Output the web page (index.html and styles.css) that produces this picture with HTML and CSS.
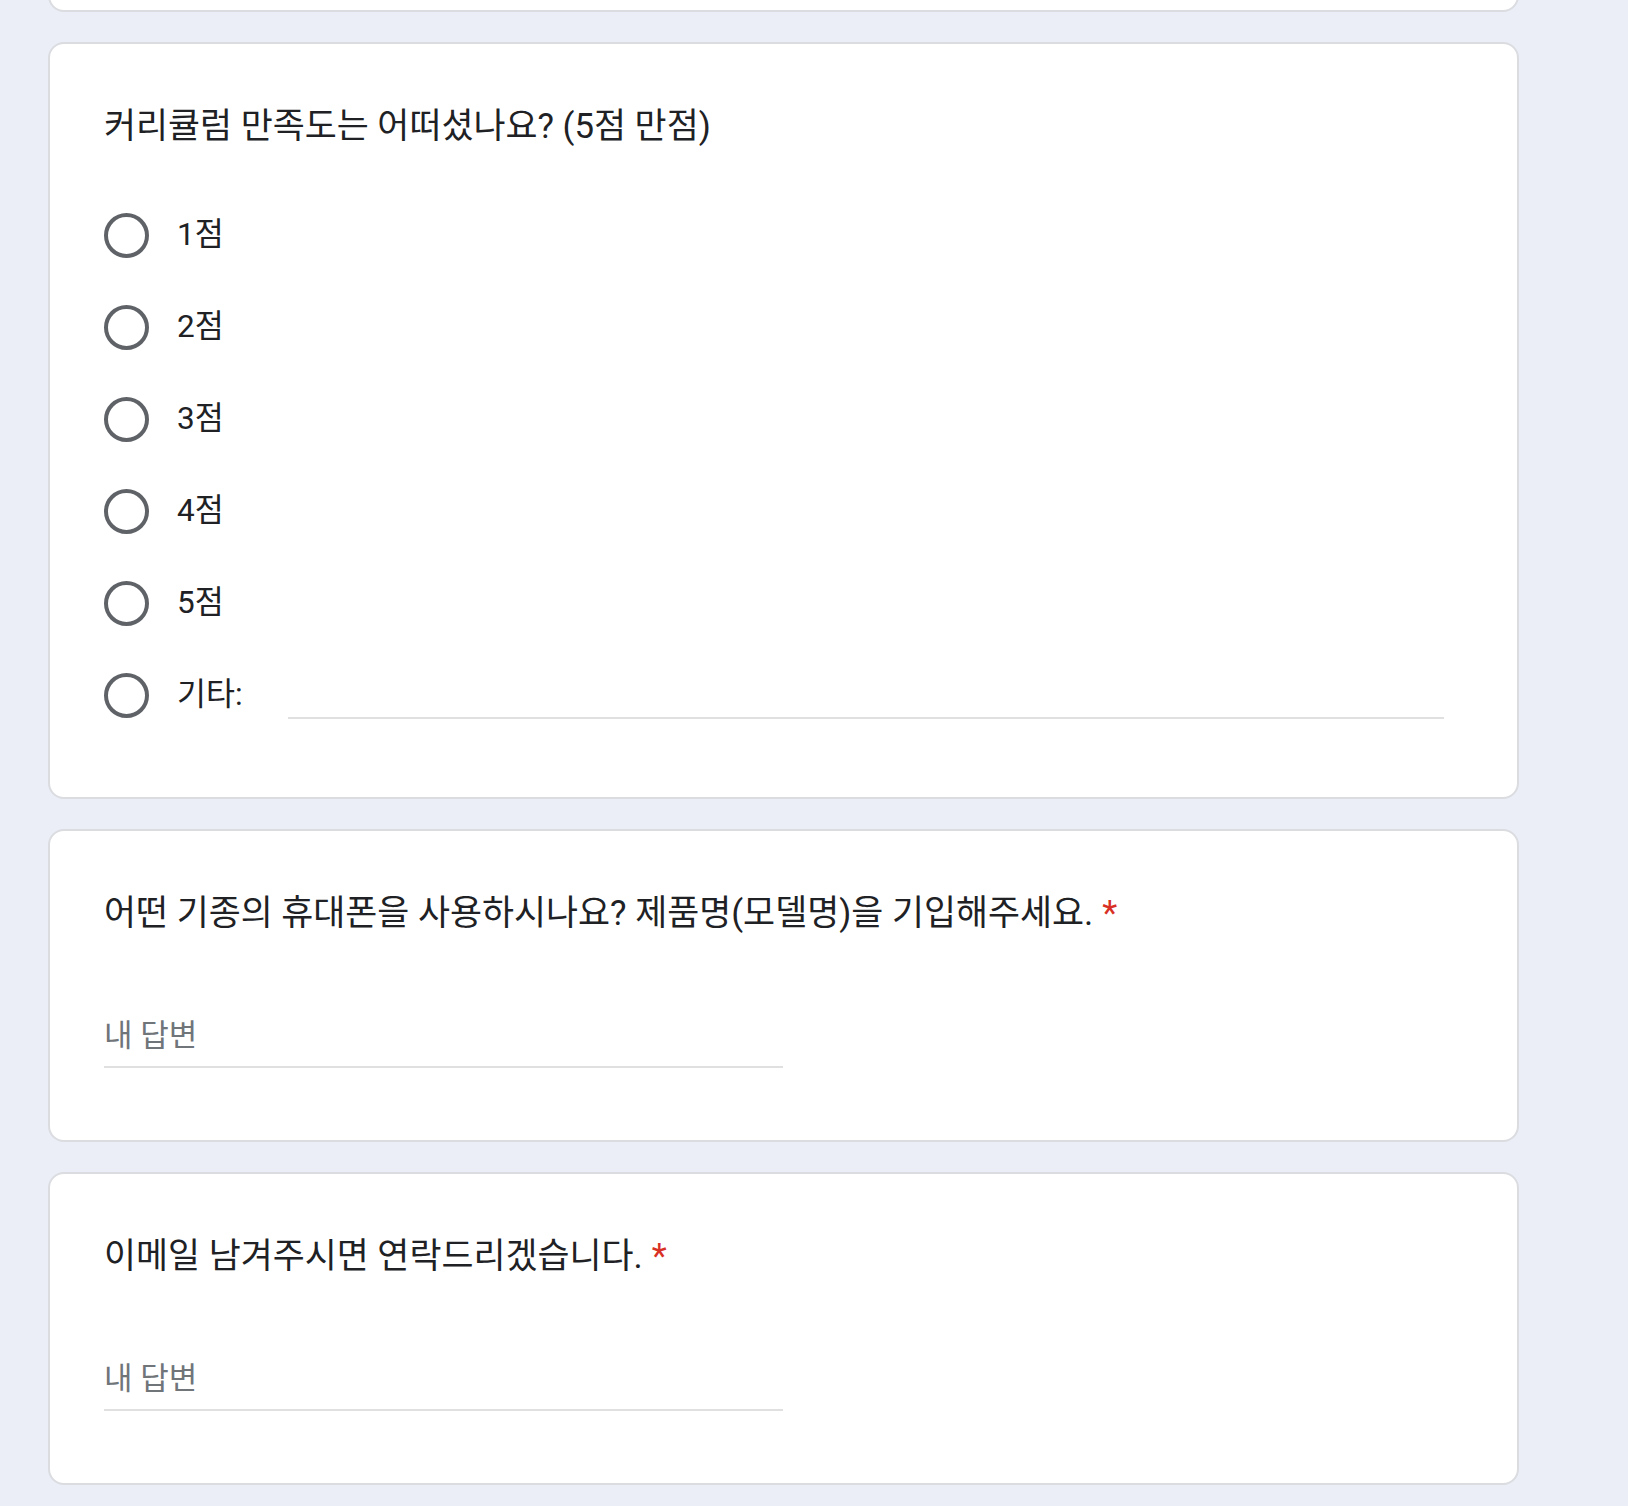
FILE: index.html
```html
<!DOCTYPE html>
<html lang="ko">
<head>
<meta charset="utf-8">
<title>설문</title>
<link rel="stylesheet" href="styles.css">
</head>
<body>
<div class="page">
  <div class="card card-stub"></div>

  <div class="card q-card q-choice">
    <div class="q-title">커리큘럼 만족도는 어떠셨나요? (5점 만점)</div>
    <div class="options">
      <div class="option"><span class="radio"></span><span class="opt-label">1점</span></div>
      <div class="option"><span class="radio"></span><span class="opt-label">2점</span></div>
      <div class="option"><span class="radio"></span><span class="opt-label">3점</span></div>
      <div class="option"><span class="radio"></span><span class="opt-label">4점</span></div>
      <div class="option"><span class="radio"></span><span class="opt-label">5점</span></div>
      <div class="option"><span class="radio"></span><span class="opt-label other-label">기타:</span><span class="other-line"></span></div>
    </div>
  </div>

  <div class="card q-card q-text">
    <div class="q-title">어떤 기종의 휴대폰을 사용하시나요? 제품명(모델명)을 기입해주세요.<span class="req">*</span></div>
    <div class="answer"><span class="placeholder">내 답변</span></div>
  </div>

  <div class="card q-card q-text">
    <div class="q-title">이메일 남겨주시면 연락드리겠습니다.<span class="req">*</span></div>
    <div class="answer"><span class="placeholder">내 답변</span></div>
  </div>
</div>
</body>
</html>
```

FILE: styles.css
```css
html, body {
  margin: 0;
  padding: 0;
}

body {
  background: #ebeef7;
  font-family: Roboto, "Noto Sans CJK KR", sans-serif;
  color: #202124;
  overflow: hidden;
}

.page {
  display: flex;
  flex-direction: column;
  gap: 30px;
  width: 1471px;
  margin-left: 48px;
}

.card {
  box-sizing: border-box;
  background: #ffffff;
  border: 2px solid #dadce0;
  border-radius: 16px;
}

.card-stub {
  margin-top: -40px;
  height: 52px;
}

.q-card {
  padding: 62px 73px 0 54px;
}

.q-choice {
  height: 757px;
}

.q-text {
  height: 313px;
}

.q-title {
  font-size: 34.8px;
  line-height: 40px;
  letter-spacing: 0;
  white-space: nowrap;
}

.req {
  color: #d93025;
  margin-left: 9px;
}

.options {
  margin-top: 43px;
  display: flex;
  flex-direction: column;
}

.option {
  height: 92px;
  display: flex;
  align-items: center;
}

.radio {
  box-sizing: border-box;
  width: 45px;
  height: 45px;
  border: 4px solid #5f6368;
  border-radius: 50%;
  flex: none;
}

.opt-label {
  margin-left: 28px;
  font-size: 31.5px;
  line-height: 40px;
  color: #202124;
}

.other-label {
  width: 111px;
  flex: none;
}

.other-line {
  flex: 1;
  height: 2px;
  background: #e0e0e0;
  margin-top: 46px;
}

.answer {
  margin-top: 83px;
  width: 679px;
  padding-bottom: 10px;
  border-bottom: 2px solid #e0e0e0;
}

.placeholder {
  display: block;
  font-size: 31px;
  line-height: 40px;
  color: #70757a;
}
```
